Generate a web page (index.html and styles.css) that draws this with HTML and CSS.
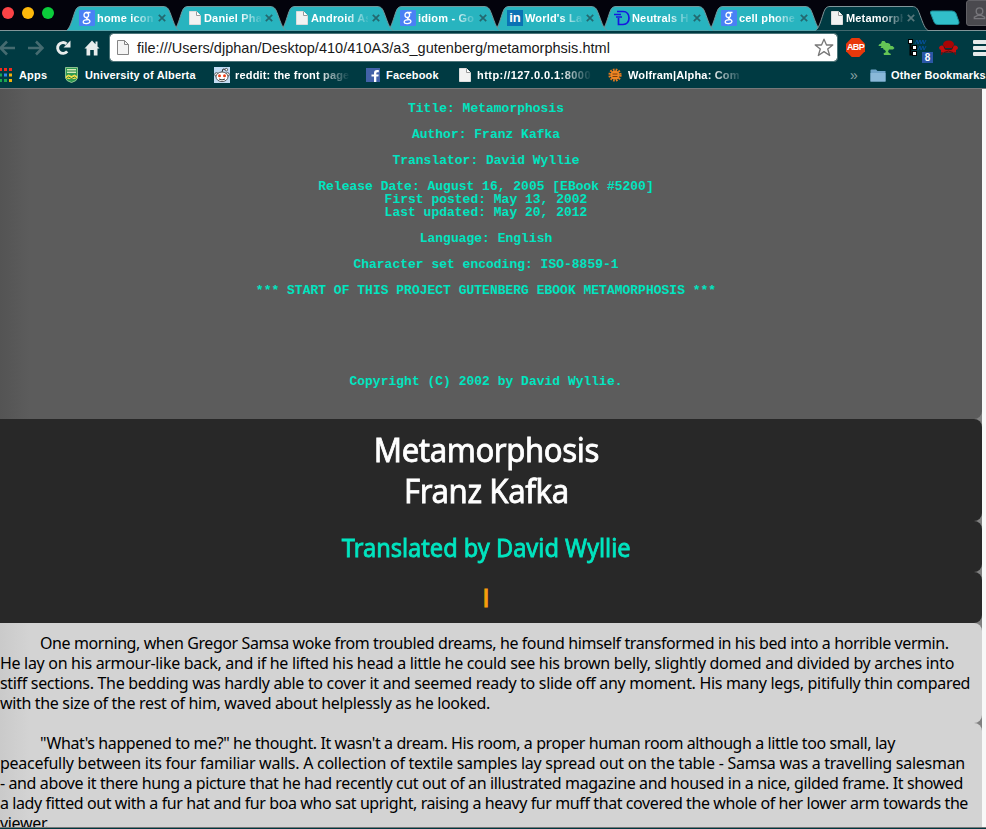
FILE: index.html
```
<!DOCTYPE html>
<html lang="en">
<head>
<meta charset="utf-8">
<title>Metamorphosis</title>
<link rel="stylesheet" href="styles.css">
</head>
<body>
<svg class="defs" aria-hidden="true">
  <symbol id="tab" viewBox="0 0 118 25">
    <path class="tab-fill" d="M.5 24.5C4 22 5.500 16 8.500 7C10 2.500 11.500 .5 15 .5H97C101 .5 102.500 2.500 104 6.500C107 14 109 22 113 24.500"/>
  </symbol>
  <symbol id="doc" viewBox="0 0 12 14"><path d="M.5 .5H7.500L11.500 4.500V13.500H.5Z" fill="#f2f2f2" stroke="#dcdcdc"/><path d="M7.500 .5V4.500H11.500" fill="#fff" stroke="#9a9a9a"/></symbol>
  <symbol id="goog" viewBox="0 0 16 16"><rect width="16" height="16" rx="1" fill="#4a80f5"/><g fill="none" stroke="#fff" stroke-width="1.300"><ellipse cx="7.300" cy="5" rx="2.300" ry="2.500"/><path d="M7.300 2.500H11.500M8.300 7.500C5.500 8.700 11.300 9.300 11 11.500C10.500 14.200 4.300 14.200 4.200 12C4.200 10.300 7 9.700 9 9.700"/></g></symbol>
  <symbol id="x" viewBox="0 0 8 8"><path d="M.8 .8L7.200 7.200M7.200 .8L.8 7.200" fill="none" stroke="currentColor" stroke-width="1.700"/></symbol>
</svg>

<header class="browser">
  <div class="tabstrip">
    <div class="lights"><i class="red"></i><i class="yellow"></i><i class="green"></i></div>
    <div class="tabs">
      <div class="tab"><svg class="shape"><use href="#tab"/></svg><svg class="fav"><use href="#goog"/></svg><span>home icon</span><svg class="x"><use href="#x"/></svg></div>
      <div class="tab"><svg class="shape"><use href="#tab"/></svg><svg class="fav page-icon"><use href="#doc"/></svg><span>Daniel Pha</span><svg class="x"><use href="#x"/></svg></div>
      <div class="tab"><svg class="shape"><use href="#tab"/></svg><svg class="fav page-icon"><use href="#doc"/></svg><span>Android As</span><svg class="x"><use href="#x"/></svg></div>
      <div class="tab"><svg class="shape"><use href="#tab"/></svg><svg class="fav"><use href="#goog"/></svg><span>idiom - Go</span><svg class="x"><use href="#x"/></svg></div>
      <div class="tab"><svg class="shape"><use href="#tab"/></svg><i class="fav linkedin">in</i><span>World's La</span><svg class="x"><use href="#x"/></svg></div>
      <div class="tab"><svg class="shape"><use href="#tab"/></svg><svg class="fav" viewBox="0 0 16 16"><path d="M3 1.500H9C17 1.500 17 14.500 9 14.500H4.500V8M0 4.500H7M2 7H8" fill="none" stroke="#1616e0" stroke-width="1.700"/></svg><span>Neutrals H</span><svg class="x"><use href="#x"/></svg></div>
      <div class="tab"><svg class="shape"><use href="#tab"/></svg><svg class="fav"><use href="#goog"/></svg><span>cell phone</span><svg class="x"><use href="#x"/></svg></div>
      <div class="tab active"><svg class="shape"><use href="#tab"/></svg><svg class="fav page-icon"><use href="#doc"/></svg><span>Metamorph</span><svg class="x"><use href="#x"/></svg></div>
    </div>
    <svg class="newtab" viewBox="0 0 32 16"><path d="M3 1H23Q26 1 27 3.500L30 12Q30.500 14.500 28 14.500H8.500Q6 14.500 5 12L1.500 3Q1 1 3 1Z" fill="#31bfca" stroke="#1d8c96"/></svg>
    <div class="user"><svg viewBox="0 0 16 16"><circle cx="8" cy="5.500" r="3.500"/><path d="M2.500 13.500V12L6 10H10L13.500 12V13.500Z"/></svg></div>
  </div>

  <div class="toolbar">
    <svg class="arrow" viewBox="0 0 17 16"><path d="M8 1.500L1.500 8L8 14.500M2 8H16" /></svg>
    <svg class="arrow fwd" viewBox="0 0 17 16"><path d="M9 1.500L15.500 8L9 14.500M15 8H1"/></svg>
    <svg class="reload" viewBox="0 0 16 16"><path d="M12.200 11.400A5.400 5.400 0 1 1 11.500 3.800" fill="none" stroke="#e8ecec" stroke-width="2.900"/><path d="M15.500 .5V7.500H8.500Z" fill="#e8ecec"/></svg>
    <svg class="home" viewBox="0 0 16 16"><path d="M8 .5L15.500 8.500H13.500V15.500H9.800V10H6.200V15.500H2.500V8.500H.5L8 .5ZM11.500 1.500H13.500V6H11.500Z" fill="#e8ecec"/></svg>
    <div class="address"><svg viewBox="0 0 12 15"><path d="M.5 .5H7.500L11.500 4.500V14.500H.5Z" fill="#f4f4f4" stroke="#858585"/><path d="M7.500 .5V4.500H11.500" fill="none" stroke="#858585"/></svg><span>file:///Users/djphan/Desktop/410/410A3/a3_gutenberg/metamorphsis.html</span><svg class="star" viewBox="0 0 20 19"><path d="M10 1.200L12.500 7H18.800L13.700 11L15.700 17.500L10 13.600L4.300 17.500L6.300 11L1.200 7H7.500Z" fill="#fff" stroke="#777" stroke-width="1.300" stroke-linejoin="round"/></svg></div>
    <div class="ext">
      <div class="abp">ABP</div>
      <svg class="tree" viewBox="0 0 17 16"><path d="M1 4.500L3 3.500L4 1H6.500L8 3H10L12 4L12.500 6H14.500L16.500 8L15 9.500H11L10 11.500L11 13L13 14L12.500 15H6L5.500 13.500L8 12L7 10L5.500 9.500L5 8H2.500L3.500 6H.5Z" fill="#64c455"/></svg>
      <div class="nodes"><svg viewBox="0 0 20 18"><path d="M2.500 3V15.500H6M3 9H6" fill="none" stroke="#000" stroke-width="2"/><path d="M7 5l2-4 1 4 2-4 1 4 2-4 1 4 2-4M10 11l2-4 1 4 2-4 1 4 2-4" fill="none" stroke="#0650a0" stroke-width=".9"/><g fill="#fff" stroke="#000" stroke-width="1"><rect x=".5" y=".5" width="4" height="4"/><rect x="4.500" y="6.500" width="4" height="4"/><rect x="4.500" y="12.500" width="4" height="4"/></g></svg><b>8</b></div>
      <svg class="chair" viewBox="0 0 19 15"><path d="M4 5Q4 .5 9.500 .5Q15 .5 15 5L13 8H6Z" fill="#a80505"/><path d="M0 7.500Q1 5 3.500 5.500Q5.500 6 6 9H13Q13.500 6 15.500 5.500Q18 5 19 7.500Q19 9.500 17 10V12.500H2V10Q0 9.500 0 7.500Z" fill="#c40d0d"/><path d="M5 6.500L6.300 9.500H12.700L14 6.500M5 12.500Q9.500 9.500 14 12.500" fill="none" stroke="#4b1212"/><path d="M2 12.500H4L3 15H2ZM15 12.500H17V15H16Z" fill="#6d1010"/></svg>
      <div class="menu"><i></i><i></i><i></i></div>
    </div>
  </div>

  <nav class="bookmarks">
    <a class="b-apps"><svg viewBox="0 0 13 14"><path d="M-2 0H2V3H-2ZM4 0H7V3H4ZM9 0H12V3H9Z" fill="#f02b1d"/><path d="M-2 5.500H2V8.500H-2Z" fill="#19a650"/><path d="M4 5.500H7V8.500H4Z" fill="#2f86f0"/><path d="M9 5.500H12V8.500H9Z" fill="#f3b20c"/><path d="M-2 11H2V14H-2ZM4 11H7V14H4Z" fill="#19a650"/><path d="M9 11H12V14H9Z" fill="#f3b20c"/></svg><span>Apps</span></a>
    <a class="b-ua"><svg viewBox="0 0 13 16"><path d="M.5 .5H12.500V11Q12 14 6.500 15.500Q1 14 .5 11Z" fill="#2f9a52" stroke="#a9d8a0" stroke-width=".8"/><path d="M2 2H11V6H2Z" fill="#d5ecb8"/><path d="M1 9l2.500-1.500 3 1.500 3-1.500 2.500 1.500v3H1Z" fill="#f0dc4a"/><path d="M2 4H11M1.500 11.500l2-1.500 3 1.500 3-1.500 2 1.500" fill="none" stroke="#1b7c3e"/></svg><span>University of Alberta</span></a>
    <a class="b-reddit"><svg viewBox="0 0 16 16"><rect width="16" height="16" fill="#c3dcf3"/><path d="M8 5L9 2L12 2.500" fill="none" stroke="#333"/><circle cx="12.300" cy="2.700" r="1.300" fill="#fff" stroke="#333" stroke-width=".8"/><circle cx="2.500" cy="7.500" r="1.800" fill="#fff" stroke="#333" stroke-width=".8"/><circle cx="13.500" cy="7.500" r="1.800" fill="#fff" stroke="#333" stroke-width=".8"/><ellipse cx="8" cy="9.800" rx="6" ry="4.800" fill="#fff" stroke="#333" stroke-width=".8"/><circle cx="5.500" cy="8.800" r="1.500" fill="#f0401a"/><circle cx="10.500" cy="8.800" r="1.500" fill="#f0401a"/><path d="M5 12Q8 13.800 11 12" fill="none" stroke="#333"/></svg><span class="fade">reddit: the front page</span></a>
    <a class="b-fb"><svg viewBox="0 0 14 14"><rect width="14" height="14" fill="#4261a8"/><path d="M8 14V8.500H5.500V6.500H8V5Q8 2 11 2H12.800V4.200H11.500Q10.300 4.200 10.300 5.300V6.500H12.700L12.400 8.500H10.300V14Z" fill="#fff"/></svg><span>Facebook</span></a>
    <a class="b-doc"><svg><use href="#doc"/></svg><span class="fade">http://127.0.0.1:8000</span></a>
    <a class="b-wolf"><svg viewBox="0 0 14 14"><circle cx="7" cy="7" r="5.400" fill="none" stroke="#e77a1d" stroke-width="2.400" stroke-dasharray="1.700 1.130"/><circle cx="7" cy="7" r="4.600" fill="#ef8524"/><path d="M4.500 6H9.500M4.500 8.500H9.500" stroke="#7b3d08"/></svg><span class="fade">Wolfram|Alpha: Com</span></a>
    <a class="b-more">»</a>
    <a class="b-other"><svg viewBox="0 0 16 13"><path d="M.5 1.500Q.5 .5 1.500 .5H6L7.500 2H15.500V12.500H.5Z" fill="#6fa3c8"/><path d="M.5 4H15.500V12.500H.5Z" fill="#8ab8d8"/></svg><span>Other Bookmarks</span></a>
  </nav>
</header>

<main class="page">
<div class="content">
<pre class="block meta">Title: Metamorphosis

Author: Franz Kafka

Translator: David Wyllie

Release Date: August 16, 2005 [EBook #5200]
First posted: May 13, 2002
Last updated: May 20, 2012

Language: English

Character set encoding: ISO-8859-1

*** START OF THIS PROJECT GUTENBERG EBOOK METAMORPHOSIS ***






Copyright (C) 2002 by David Wyllie.</pre>
<h1 class="block"><span>Metamorphosis<br>Franz Kafka</span></h1>
<h2 class="block author"><span>Translated by David Wyllie</span></h2>
<h2 class="block chapter">I</h2>
<p class="block"><span class="l1">One morning, when Gregor Samsa woke from troubled dreams, he found himself transformed in his bed into a horrible vermin.</span><span class="l2">He lay on his armour-like back, and if he lifted his head a little he could see his brown belly, slightly domed and divided by arches into</span><span class="l3">stiff sections. The bedding was hardly able to cover it and seemed ready to slide off any moment. His many legs, pitifully thin compared</span><span class="l4">with the size of the rest of him, waved about helplessly as he looked.</span></p>
<p class="block"><span class="l5">"What's happened to me?" he thought. It wasn't a dream. His room, a proper human room although a little too small, lay</span><span class="l6">peacefully between its four familiar walls. A collection of textile samples lay spread out on the table - Samsa was a travelling salesman</span><span class="l7">- and above it there hung a picture that he had recently cut out of an illustrated magazine and housed in a nice, gilded frame. It showed</span><span class="l8">a lady fitted out with a fur hat and fur boa who sat upright, raising a heavy fur muff that covered the whole of her lower arm towards the</span><span class="l4">viewer.</span></p>
</div>
</main>
</body>
</html>
```
FILE: styles.css
```
* { box-sizing: border-box; }
html, body { height: 100%; }
body {
  margin: 0;
  height: 829px;
  overflow: hidden;
  display: flex;
  flex-direction: column;
  background: #00373f;
  font-family: "Liberation Sans", Arial, sans-serif;
}
svg { display: block; flex: none; }
.defs { position: absolute; width: 0; height: 0; }

/* browser frame */
.browser { flex: none; height: 89px; background: #003a42; border-bottom: 1px solid #77787a; color: #fff; font-weight: bold; font-size: 11px; letter-spacing: .17px; }
.tabstrip { height: 31px; display: flex; align-items: flex-end; background: #03030c; border-bottom: 1px solid #82969a; }
.lights { width: 66px; flex: none; display: flex; gap: 8px; align-self: flex-start; padding: 7px 0 0 2px; }
.lights i { width: 12px; height: 12px; border-radius: 50%; }
.red { background: #fc4346; }
.yellow { background: #fdb90b; }
.green { background: #0bcd3b; }
.tabs { display: flex; flex: none; width: 864px; }
.tab { --fill: #28b4bf; --edge: #73979b; position: relative; width: 107px; flex: none; height: 24px; display: flex; align-items: center; padding-left: 13px; color: #fff; }
.tab .shape { position: absolute; left: 0; top: 0; width: 118px; height: 25px; }
.tab-fill { fill: var(--fill); stroke: var(--edge); }
.tab:nth-child(1) { z-index: 8; }
.tab:nth-child(2) { z-index: 7; }
.tab:nth-child(3) { z-index: 6; }
.tab:nth-child(4) { z-index: 5; }
.tab:nth-child(5) { z-index: 4; }
.tab:nth-child(6) { z-index: 3; }
.tab:nth-child(7) { z-index: 2; }
.tab.active { --fill: #003a42; --edge: #82969a; z-index: 9; }
.tab .fav { position: relative; width: 16px; height: 16px; margin-right: 2px; flex: none; }
.tab .page-icon { width: 12px; height: 14px; margin: 0 3px; }
.tab span { position: relative; width: 57px; white-space: nowrap; line-height: 16px; -webkit-mask-image: linear-gradient(90deg, #000 62%, transparent 104%); mask-image: linear-gradient(90deg, #000 62%, transparent 104%); }
.tab .x { position: relative; width: 8px; height: 8px; margin-left: 4px; color: #23686f; }
.active .x { color: #56777b; }
.linkedin { background: #0a72b4; font: bold 13px/16px "Liberation Sans", sans-serif; text-align: center; letter-spacing: 0; }
.newtab { width: 32px; height: 16px; margin: 0 0 4px -1px; }
.user { width: 30px; height: 26px; margin: 0 -10px 4px 5px; border: 1px solid #626166; border-radius: 3px; background: #4a494e; padding: 5px 0 0 5px; }
.user svg { width: 15px; fill: none; stroke: #77767b; stroke-width: 1.500; }

.toolbar { height: 33px; display: flex; align-items: center; }
.arrow { width: 17px; height: 16px; margin-right: 11px; margin-left: -1px; fill: none; stroke: #456b70; stroke-width: 2.600; }
.fwd { margin: 0 11px 0 0; }
.reload { width: 16px; height: 16px; margin-right: 13px; }
.home { width: 16px; height: 16px; }
.address { width: 729px; height: 29px; margin-left: 9px; flex: none; display: flex; align-items: center; background: #fff; border: 1px solid #002b31; outline: 1px solid #4d7579; outline-offset: -1px; border-radius: 4px; color: #191919; font-weight: normal; font-size: 14.500px; letter-spacing: .02px; }
.address svg { width: 12px; height: 15px; margin: 0 8px 0 7px; }
.address .star { width: 20px; height: 19px; margin: 0 3px 0 auto; }
.ext { display: flex; align-items: center; flex: none; height: 30px; margin-left: 8px; }
.abp { width: 19px; height: 19px; background: #e8380b; clip-path: polygon(30% 0, 70% 0, 100% 30%, 100% 70%, 70% 100%, 30% 100%, 0 70%, 0 30%); text-align: center; font-size: 9px; line-height: 19px; letter-spacing: -.6px; }
.tree { width: 17px; height: 16px; margin-left: 13px; }
.nodes { position: relative; width: 20px; height: 18px; margin-left: 13px; }
.nodes b { position: absolute; left: 14px; top: 13px; width: 11px; height: 11px; background: #2b57a7; font-size: 10px; line-height: 11px; text-align: center; letter-spacing: 0; }
.chair { width: 19px; height: 15px; margin-left: 11px; }
.menu { margin-left: 15px; width: 20px; display: grid; gap: 2px; margin-right: -10px; }
.menu i { height: 4px; border-radius: 1px; background: #e6eaea; }

.bookmarks { height: 22px; display: flex; align-items: center; white-space: nowrap; }
.bookmarks a { display: flex; align-items: center; flex: none; }
.bookmarks span { line-height: 16px; }
.b-apps { width: 65px; }
.b-apps svg { width: 13px; height: 14px; margin-right: 6px; }
.b-ua { width: 149px; }
.b-ua svg { width: 13px; height: 16px; margin-right: 7px; }
.b-reddit { width: 152px; }
.b-reddit svg { width: 16px; height: 16px; margin-right: 5px; }
.b-fb { width: 93px; }
.b-fb svg { width: 14px; height: 14px; margin-right: 6px; }
.b-doc { width: 149px; letter-spacing: .45px; }
.b-doc svg { width: 12px; height: 14px; margin-right: 6px; }
.b-wolf { width: 242px; }
.b-wolf svg { width: 14px; height: 14px; margin-right: 6px; }
.b-more { width: 20px; color: #8ba1a3; font-size: 14px; font-weight: normal; }
.b-other svg { width: 16px; height: 13px; margin-right: 5px; }
.fade { width: 115px; -webkit-mask-image: linear-gradient(90deg, #000 72%, transparent 100%); mask-image: linear-gradient(90deg, #000 72%, transparent 100%); }

/* document */
.page { height: 739px; flex: none; overflow: hidden; background: #f8f8f8; border-bottom: 1px solid #777; }
.content { width: 982px; background: #808080; font-family: "Noto Sans", sans-serif; }
.block { margin: 0; border-radius: 0 8px 8px 0; padding: 0 10px 0 0; text-align: center; overflow: hidden; }
.meta { height: 330px; padding-top: 13px; border-radius: 0 0 8px 0; background: linear-gradient(90deg, #545454, #5c5c5c 30px); color: #00e5c0; font: bold 13px/13px "Liberation Mono", monospace; }
h1, h2 { background: #282828; font-weight: normal; -webkit-text-stroke: .8px currentColor; }
h1 span, h2 span { display: inline-block; transform: scaleX(.943); }
h1.block { height: 102px; padding-top: 10px; color: #fff; font-size: 33px; line-height: 41px; letter-spacing: -.42px; }
h2.block { height: 51px; padding-top: 1px; font-size: 25px; line-height: 50px; }
.author { color: #00e5c0; }
h2.chapter { color: #fa9d0b; font-family: "Liberation Sans", sans-serif; -webkit-text-stroke-width: 1px; }
p.block { padding: 10px 0; background: linear-gradient(90deg, #cacaca, #d3d3d3 30px); color: #000; font-size: 16px; line-height: 20px; text-align: left; }
p span { display: block; white-space: nowrap; }
.l1 { letter-spacing: -.41px; padding-left: 40px; }
.l2 { letter-spacing: -.314px; }
.l3 { letter-spacing: -.324px; }
.l4 { letter-spacing: -.337px; }
.l5 { letter-spacing: -.411px; padding-left: 40px; }
.l6 { letter-spacing: -.266px; }
.l7 { letter-spacing: -.388px; }
.l8 { letter-spacing: -.404px; }
```
